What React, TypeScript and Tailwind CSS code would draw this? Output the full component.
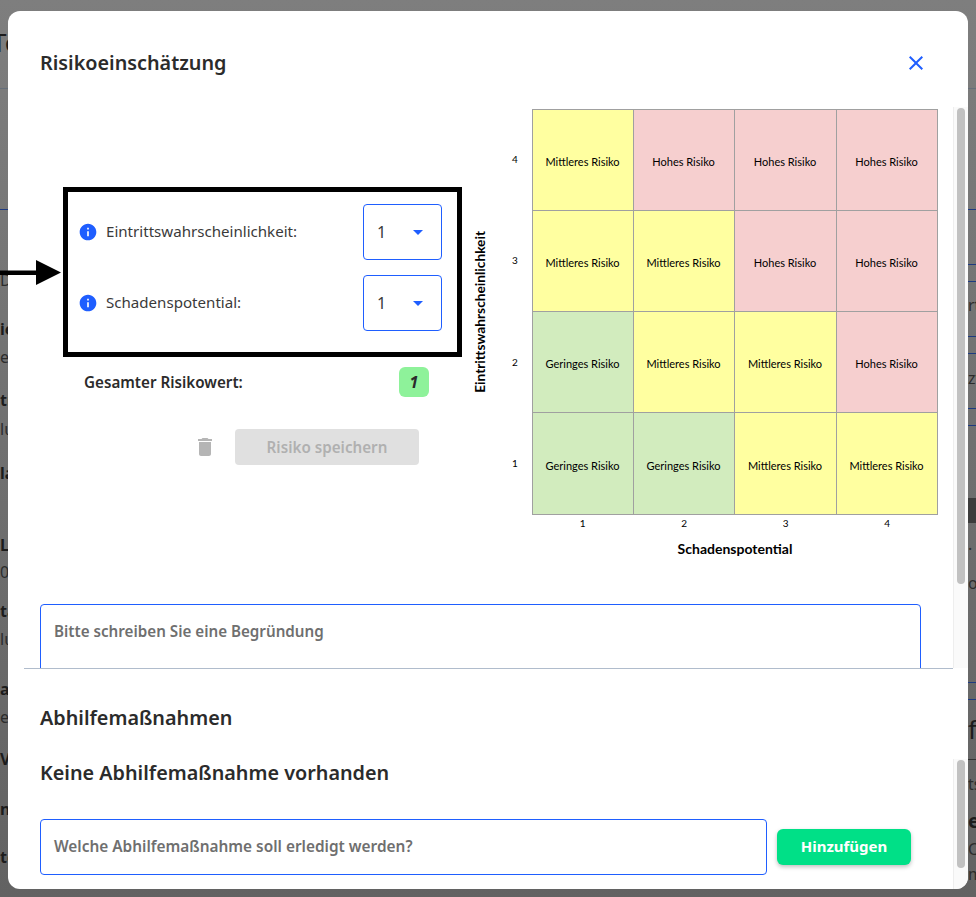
import React from 'react';

const SANS = "font-['Noto_Sans',sans-serif]";

type Level = 'low' | 'mid' | 'high';

const levelText: Record<Level, string> = {
  low: 'Geringes Risiko',
  mid: 'Mittleres Risiko',
  high: 'Hohes Risiko',
};

const levelBg: Record<Level, string> = {
  low: 'bg-[#d2ecbe]',
  mid: 'bg-[#ffffa0]',
  high: 'bg-[#f6cfcf]',
};

const matrix: Level[][] = [
  ['mid', 'high', 'high', 'high'],
  ['mid', 'mid', 'high', 'high'],
  ['low', 'mid', 'mid', 'high'],
  ['low', 'low', 'mid', 'mid'],
];

// page content showing past the left edge of the dialog
const leftPeek = [
  { h: 'h-[29px]', text: '' },
  { h: 'h-[59px] text-[26px] indent-[-8px] text-[#1c1c1c]', text: 'Tc' },
  { h: 'h-[121px] border-t border-[#666f7a]', text: '' },
  { h: 'h-[112px] border-t border-[#1e3a80] pt-[62px] text-[#2c2c2c]', text: 'DA' },
  { h: 'h-[28px] font-bold', text: 'ie' },
  { h: 'h-[43px] text-[#2c2c2c]', text: 'es' },
  { h: 'h-[29px] font-bold', text: 'tr' },
  { h: 'h-[44px] text-[#2c2c2c]', text: 'lu' },
  { h: 'h-[72px] font-bold', text: 'la' },
  { h: 'h-[27px] font-bold', text: 'L' },
  { h: 'h-[39px] text-[#2c2c2c]', text: '0' },
  { h: 'h-[28px] font-bold', text: 'ta' },
  { h: 'h-[50px] text-[#2c2c2c]', text: 'lu' },
  { h: 'h-[28px] font-bold', text: 'a' },
  { h: 'h-[42px] text-[#2c2c2c]', text: 'e' },
  { h: 'h-[50px] font-bold', text: 'V' },
  { h: 'h-[48px] font-bold', text: 'n' },
  { h: 'h-[30px] font-bold', text: 'te' },
];

const rightPeek = [
  { h: 'h-[88px]', text: '' },
  { h: 'h-[121px] border-t border-[#666f7a]', text: '' },
  { h: 'h-[55px] border-t border-[#1e3a80]', text: '' },
  { h: 'h-[17px] border-t border-[#1e3a80]', text: '' },
  { h: 'h-[55px] border-t border-[#1e3a80] pt-[15px] text-[#2c2c2c]', text: 'rt' },
  { h: 'h-[17px] border-t border-[#1e3a80]', text: '' },
  { h: 'h-[55px] border-t border-[#1e3a80] pt-[16px] text-[#2c2c2c]', text: 'zv' },
  { h: 'h-[17px] border-t border-[#1e3a80]', text: '' },
  { h: 'h-[73px] border-t border-[#1e3a80]', text: '' },
  { h: 'h-[25px] bg-[#3c3c3c]', text: '' },
  { h: 'h-[52px] pt-[18px] text-[#2c2c2c]', text: '· ·' },
  { h: 'h-[107px] text-[#2c2c2c]', text: 'o' },
  { h: 'h-[17px] border-t border-[#1e3a80]', text: '' },
  { h: 'h-[60px] border-t border-[#1e3a80] pt-[16px] text-[26px] text-[#1c1c1c]', text: 'f' },
  { h: 'h-[52px] border-t border-[#333] pt-[16px] text-[#2c2c2c]', text: 'ts' },
  { h: 'h-[30px] text-[20px] font-bold', text: 'e' },
  { h: 'h-[25px] text-[#2c2c2c]', text: 'C' },
  { h: 'h-[18px] text-[#2c2c2c]', text: 'm' },
];

const InfoIcon = () => (
  <svg width="20" height="20" viewBox="0 0 24 24" className="shrink-0 fill-[#1f5eff]">
    <path d="M12 2C6.48 2 2 6.48 2 12s4.48 10 10 10 10-4.48 10-10S17.52 2 12 2zm1 15h-2v-6h2v6zm0-8h-2V7h2v2z" />
  </svg>
);

const RiskSelect = ({ label }: { label: string }) => (
  <div className="flex items-center justify-between">
    <div className="flex items-center gap-[8px]">
      <InfoIcon />
      <span className="pb-px text-[15.1px] text-[#3a3a3a]">{label}</span>
    </div>
    <div className="flex h-[56px] w-[79px] items-center justify-between rounded-[4px] border border-[#1f5eff] pl-[13px] pr-[11px] text-[16px] text-[#3a3a3a]">
      <span>1</span>
      <svg width="24" height="24" viewBox="0 0 24 24" className="fill-[#1f5eff]">
        <path d="M7 10l5 5 5-5z" />
      </svg>
    </div>
  </div>
);

const Scrollbar = ({ track, thumb }: { track: string; thumb: string }) => (
  <div className={`w-[15px] shrink-0 border-l border-[#eeeeee] bg-[#fafafa] pl-[3px] pt-px ${track}`}>
    <div className={`w-[8px] rounded-full bg-[#c1c1c1] ${thumb}`} />
  </div>
);

const RiskMatrix = () => (
  <div className="flex font-['Lato',sans-serif] text-black">
    <div className="flex h-[405px] w-[15px] items-center justify-center">
      <span className="rotate-180 whitespace-nowrap text-[13.7px] font-bold [writing-mode:vertical-rl]">
        Eintrittswahrscheinlichkeit
      </span>
    </div>
    <div className="ml-[21px] grid h-[405px] w-[12px] grid-rows-4 text-[10px]">
      {[4, 3, 2, 1].map((n) => (
        <div key={n} className="flex items-center justify-center">
          {n}
        </div>
      ))}
    </div>
    <div className="ml-[11px]">
      <div className="grid h-[406px] w-[406px] grid-cols-[101px_101px_102px_101px] grid-rows-[101px_101px_101px_102px] border-l border-t border-[#a0a0a0]">
        {matrix.flat().map((level, i) => (
          <div
            key={i}
            className={`flex items-center justify-center border-b border-r border-[#a0a0a0] pr-px pt-[5px] text-[11px] ${levelBg[level]}`}
          >
            {levelText[level]}
          </div>
        ))}
      </div>
      <div className="grid h-[16px] grid-cols-4 items-center text-center text-[10px]">
        {[1, 2, 3, 4].map((n) => (
          <span key={n}>{n}</span>
        ))}
      </div>
      <div className="pt-[8px] text-center text-[14px] font-bold leading-[19px]">Schadenspotential</div>
    </div>
  </div>
);

export default function App() {
  return (
    <div className={`relative h-[897px] w-[976px] overflow-hidden bg-gradient-to-b from-[#7e7e7e] to-[#626262] text-[16px] antialiased ${SANS}`}>
      {/* page behind the dialog */}
      <div className="flex h-full justify-between leading-none">
        <div className="w-full overflow-hidden">
          {leftPeek.map((row, i) => (
            <div key={i} className={`overflow-hidden whitespace-nowrap text-[#1c1c1c] ${row.h}`}>
              {row.text}
            </div>
          ))}
        </div>
        <div className="w-full overflow-hidden">
          {rightPeek.map((row, i) => (
            <div key={i} className={`overflow-hidden whitespace-nowrap pl-[calc(100%-8px)] text-[#1c1c1c] ${row.h}`}>
              {row.text}
            </div>
          ))}
        </div>
      </div>

      {/* dialog */}
      <div className="absolute left-[8px] top-[11px] flex h-[878px] w-[960px] flex-col overflow-hidden rounded-[12px] bg-white text-[#2b2b2b]">
        <div className="flex h-[96px] shrink-0 items-start justify-between pl-[32px] pr-[40px] pt-[37px]">
          <h2 className="text-[19.8px] font-semibold leading-[30px]">Risikoeinschätzung</h2>
          <svg width="24" height="24" viewBox="0 0 24 24" className="mt-[3px] fill-[#1f5eff]">
            <path d="M19 6.41 17.59 5 12 10.59 6.41 5 5 6.41 10.59 12 5 17.59 6.41 19 12 13.41 17.59 19 19 17.59 13.41 12z" />
          </svg>
        </div>

        <div className="flex h-[561px] shrink-0 overflow-hidden">
          <div className="min-w-0 flex-1 pl-[32px]">
            <div className="flex h-[497px] pt-[2px]">
              <div className="ml-[23px] w-[399px] shrink-0 pt-[78px]">
                <div className="flex flex-col gap-[15px] border-[5px] border-black pb-[21px] pl-[10px] pr-[15px] pt-[12px]">
                  <RiskSelect label="Eintrittswahrscheinlichkeit:" />
                  <RiskSelect label="Schadenspotential:" />
                </div>
                <div className="ml-[21px] mr-[33px] mt-[10px] flex items-center justify-between">
                  <span className="text-[15.2px] font-semibold">Gesamter Risikowert:</span>
                  <span className="flex h-[30px] w-[30px] items-center justify-center rounded-[6px] bg-[#8ef29a] text-[16px] font-bold italic">
                    1
                  </span>
                </div>
                <div className="mr-[43px] mt-[32px] flex items-center justify-end gap-[18px]">
                  <svg width="24" height="24" viewBox="0 0 24 24" className="fill-[#b5b5b5]">
                    <path d="M6 19c0 1.1.9 2 2 2h8c1.1 0 2-.9 2-2V7H6v12zM19 4h-3.5l-1-1h-5l-1 1H5v2h14V4z" />
                  </svg>
                  <button className="h-[36px] w-[184px] rounded-[4px] bg-[#e0e0e0] text-[15.2px] font-semibold text-[#b0b0b0]">
                    Risiko speichern
                  </button>
                </div>
              </div>
              <div className="ml-[11px]">
                <RiskMatrix />
              </div>
            </div>
            <div className="flex h-[100px] w-[881px] rounded-[4px] border border-[#1f5eff] px-[13px] pt-[15px] text-[15.2px] font-semibold leading-[22px] text-[#6f6f6f]">
              Bitte schreiben Sie eine Begründung
            </div>
          </div>
          <Scrollbar track="h-full" thumb="h-[476px]" />
        </div>

        <div className="flex flex-1 items-end">
          <div className="min-w-0 flex-1 self-stretch">
            <div className="ml-[16px] border-t border-[#b0bccc] pl-[16px] pt-[34px]">
              <h3 className="text-[19.8px] font-semibold leading-[30px]">Abhilfemaßnahmen</h3>
              <h3 className="mt-[25px] text-[19.8px] font-semibold leading-[30px]">Keine Abhilfemaßnahme vorhanden</h3>
              <div className="mt-[31px] flex items-center gap-[10px]">
                <div className="flex h-[56px] w-[727px] items-center rounded-[4px] border border-[#1f5eff] px-[13px] text-[15.4px] font-semibold text-[#6f6f6f]">
                  Welche Abhilfemaßnahme soll erledigt werden?
                </div>
                <button className="h-[36px] w-[134px] rounded-[6px] bg-[#00e087] pb-[2px] text-[15px] font-bold text-white shadow-[0_2px_4px_rgba(0,0,0,0.25)]">
                  Hinzufügen
                </button>
              </div>
            </div>
          </div>
          <Scrollbar track="h-[130px]" thumb="h-[108px]" />
        </div>
      </div>

      {/* annotation arrow pointing at the highlighted box */}
      <svg width="62" height="26" viewBox="0 0 62 26" className="absolute left-0 top-[260px]">
        <path d="M0 10.5h36V0l25 12.5L36 25V15H0z" fill="#000" />
      </svg>
    </div>
  );
}
